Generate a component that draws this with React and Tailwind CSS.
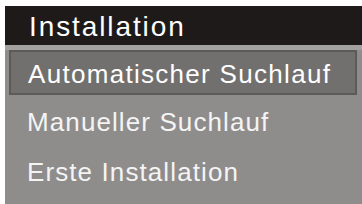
export default function App() {
  const font = { fontFamily: '"Liberation Sans", Arial, sans-serif' };
  return (
    <div className="w-[362px] h-[204px] bg-white overflow-hidden pt-[6px] pl-[5px]" style={font}>
      <div className="flex flex-col h-full">
        <div className="h-[39px] shrink-0 bg-[#1d1a19] pl-[24px] flex items-center text-white text-[28px] tracking-[1.9px] leading-none">
          <span className="pt-[3px]">Installation</span>
        </div>
        <div className="flex-1 bg-[#8f8d8b] border-t-[5px] border-[#a3a19f] pl-[4px] pr-[5px] flex flex-col">
          <div className="h-[45px] shrink-0 bg-[#72706e] border-2 border-[#5d5b59] pl-[17px] flex items-center text-white text-[26px] tracking-[1.3px] leading-none">
            <span className="pt-[2px]">Automatischer Suchlauf</span>
          </div>
          <div className="h-[50px] shrink-0 pl-[18px] flex items-center text-[#f4f4f4] text-[26px] tracking-[1.1px] leading-none">
            <span className="pt-[3px]">Manueller Suchlauf</span>
          </div>
          <div className="h-[50px] shrink-0 pl-[18px] flex items-center text-[#f4f4f4] text-[26px] tracking-[1.1px] leading-none">
            <span className="pt-[3px]">Erste Installation</span>
          </div>
        </div>
      </div>
    </div>
  );
}
